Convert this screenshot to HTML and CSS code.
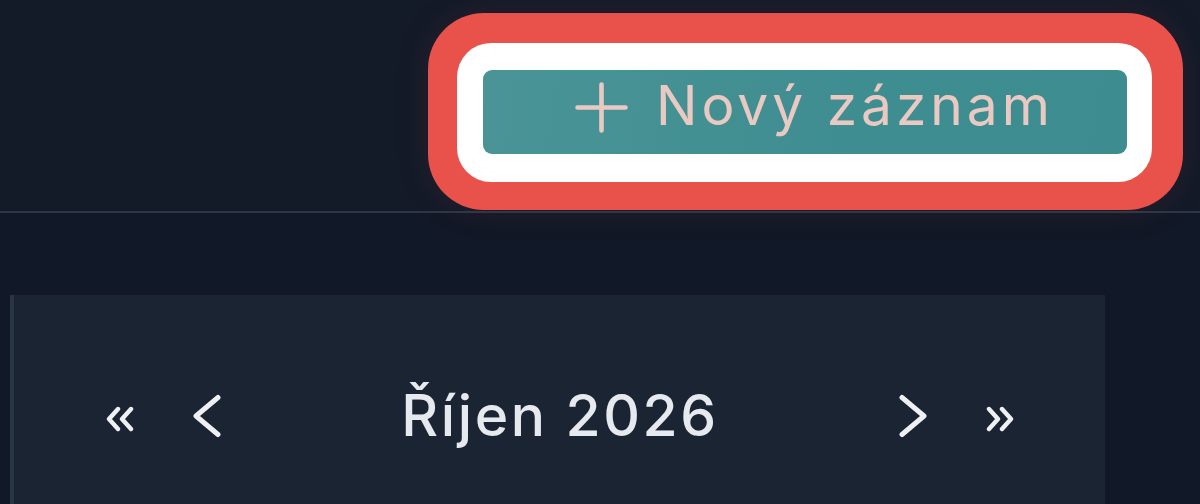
FILE: index.html
```html
<!DOCTYPE html>
<html lang="cs">
<head>
<meta charset="utf-8">
<title>Kalendář</title>
<link rel="stylesheet" href="styles.css">
</head>
<body>
<header class="header">
  <div class="ring-red">
    <div class="ring-white">
      <button class="btn-new" type="button">
        <svg class="plus" width="53" height="51" viewBox="0 0 53 51" aria-hidden="true">
          <path d="M26.5 2.5V48.5M2.5 25.5H50.5" fill="none" stroke="currentColor" stroke-width="4.6" stroke-linecap="round"/>
        </svg>
        <span class="btn-label">Nový záznam</span>
      </button>
    </div>
  </div>
</header>
<main class="main">
  <section class="panel">
    <div class="nav">
      <div class="nav-group">
        <button class="nav-btn dbl" type="button" aria-label="Předchozí rok">
          <svg width="30" height="26" viewBox="0 0 30 26"><path d="M13 3L4 13L13 23M26 3L17 13L26 23" fill="none" stroke="currentColor" stroke-width="4.4" stroke-linecap="round" stroke-linejoin="round"/></svg>
        </button>
        <button class="nav-btn sgl" type="button" aria-label="Předchozí měsíc">
          <svg width="32" height="44" viewBox="0 0 32 44"><path d="M27 3.5L5 22L27 40.5" fill="none" stroke="currentColor" stroke-width="5" stroke-linecap="round" stroke-linejoin="round"/></svg>
        </button>
      </div>
      <h2 class="title">Říjen 2026</h2>
      <div class="nav-group">
        <button class="nav-btn sgl" type="button" aria-label="Další měsíc">
          <svg width="32" height="44" viewBox="0 0 32 44"><path d="M5 3.5L27 22L5 40.5" fill="none" stroke="currentColor" stroke-width="5" stroke-linecap="round" stroke-linejoin="round"/></svg>
        </button>
        <button class="nav-btn dbl" type="button" aria-label="Další rok">
          <svg width="30" height="26" viewBox="0 0 30 26"><path d="M4 3L13 13L4 23M17 3L26 13L17 23" fill="none" stroke="currentColor" stroke-width="4.4" stroke-linecap="round" stroke-linejoin="round"/></svg>
        </button>
      </div>
    </div>
  </section>
</main>
</body>
</html>
```
FILE: styles.css
```css
* { box-sizing: border-box; }

html, body {
  margin: 0;
  padding: 0;
}

body {
  width: 1200px;
  height: 504px;
  overflow: hidden;
  background: #111827;
  font-family: Inter, "Noto Sans", "DejaVu Sans", sans-serif;
}

.header {
  height: 213px;
  display: flex;
  justify-content: flex-end;
  align-items: flex-start;
  padding: 13px 17px 0 0;
  background: #131a28;
  border-bottom: 2px solid #2c3646;
}

.ring-red {
  padding: 30px 31px 28px 29px;
  border-radius: 56px;
  background: #e8524a;
  box-shadow: 0 0 36px rgba(232, 82, 74, 0.10);
}

.ring-white {
  padding: 27px 25px 28px 26px;
  border-radius: 34px;
  background: #ffffff;
}

.btn-new {
  width: 644px;
  height: 84px;
  margin: 0;
  border: 0;
  border-radius: 9px;
  background: linear-gradient(100deg, #4a9497 0%, #3e8d90 60%, #3d8c8f 100%);
  color: #ebc9c3;
  display: flex;
  align-items: flex-start;
  padding: 12px 0 0 92px;
  gap: 28px;
  font-family: Inter, "Noto Sans", sans-serif;
  cursor: pointer;
}

.plus {
  flex: none;
  display: block;
}

.btn-label {
  font-size: 55px;
  line-height: 1;
  font-weight: 400;
  letter-spacing: 4px;
  margin-top: -4px;
}

.main {
  padding: 82px 0 0 10px;
}

.panel {
  width: 1095px;
  height: 209px;
  padding-top: 91px;
  background: #1b2433;
  border-left: 4px solid #2a3543;
}

.nav {
  display: flex;
  justify-content: space-between;
  align-items: center;
  height: 60px;
  padding: 0 90px 0 91px;
}

.nav-group {
  display: flex;
  align-items: center;
  gap: 56px;
}

.nav-btn {
  background: none;
  border: 0;
  padding: 0;
  margin: 0;
  color: #eef0f3;
  display: block;
  line-height: 0;
  cursor: pointer;
}

.nav-btn svg { display: block; }

.nav-btn.dbl { margin-top: 6px; }

.title {
  margin: 0;
  color: #e6e9ee;
  font-size: 57px;
  font-weight: 500;
  line-height: 60px;
  letter-spacing: 2.6px;
}
```
